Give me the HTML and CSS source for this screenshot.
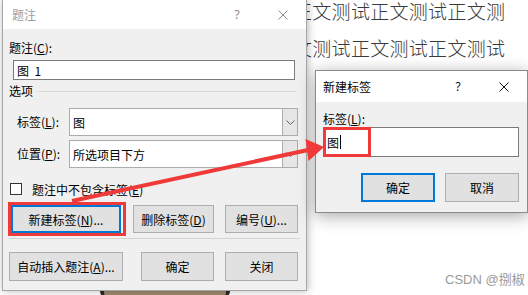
FILE: index.html
```html
<!DOCTYPE html>
<html lang="zh-CN">
<head>
<meta charset="utf-8">
<title>题注</title>
<link rel="stylesheet" href="styles.css">
</head>
<body>
<main class="doc">
  <p class="doc-line">正文测试正文测试正文测</p>
  <p class="doc-line">文测试正文测试正文测试</p>
</main>
<div class="doc-pic"></div>
<div class="watermark">CSDN @捌椒</div>

<section class="win win-caption">
  <header class="titlebar is-inactive">
    <span class="title">题注</span>
    <span class="tb-btn tb-help">?</span>
    <span class="tb-btn"><svg class="x-icon" width="10" height="10" viewBox="0 0 10 10"><path d="M0.5 0.5L9.5 9.5M9.5 0.5L0.5 9.5" stroke="currentColor" stroke-width="1" fill="none"/></svg></span>
  </header>
  <div class="win-body caption-body">
    <div class="lbl">题注(<u>C</u>):</div>
    <div class="textbox caption-input">图&nbsp;&nbsp;1</div>
    <div class="group-head"><span>选项</span><span class="rule"></span></div>
    <div class="field-row">
      <span class="field-lbl">标签(<u>L</u>):</span>
      <div class="combo"><span class="combo-val">图</span><span class="combo-btn"><svg width="9" height="5" viewBox="0 0 9 5"><path d="M0.5 0.5L4.5 4.5L8.5 0.5" stroke="#606060" stroke-width="1" fill="none"/></svg></span></div>
    </div>
    <div class="field-row field-row-2">
      <span class="field-lbl">位置(<u>P</u>):</span>
      <div class="combo"><span class="combo-val">所选项目下方</span><span class="combo-btn"><svg width="9" height="5" viewBox="0 0 9 5"><path d="M0.5 0.5L4.5 4.5L8.5 0.5" stroke="#606060" stroke-width="1" fill="none"/></svg></span></div>
    </div>
    <div class="check-row"><span class="checkbox"></span><span>题注中不包含标签(<u>E</u>)</span></div>
    <div class="btn-row btn-row-top">
      <div class="mark-box"><button class="btn btn-focus w110">新建标签(<u>N</u>)...</button></div>
      <button class="btn w81 ml7">删除标签(<u>D</u>)</button>
      <button class="btn w73 ml11">编号(<u>U</u>)...</button>
    </div>
    <div class="sep"></div>
    <div class="btn-row btn-row-bottom">
      <button class="btn w114 tall">自动插入题注(<u>A</u>)...</button>
      <button class="btn w73 tall ml18">确定</button>
      <button class="btn w73 tall ml11">关闭</button>
    </div>
  </div>
</section>

<section class="win win-newlabel">
  <header class="titlebar">
    <span class="title">新建标签</span>
    <span class="tb-btn tb-help dark">?</span>
    <span class="tb-btn dark"><svg class="x-icon" width="10" height="10" viewBox="0 0 10 10"><path d="M0.5 0.5L9.5 9.5M9.5 0.5L0.5 9.5" stroke="currentColor" stroke-width="1" fill="none"/></svg></span>
  </header>
  <div class="win-body nl-body">
    <div class="lbl">标签(<u>L</u>):</div>
    <div class="textbox nl-input"><span>图</span><span class="caret"></span><span class="mark-input"></span></div>
    <div class="nl-buttons">
      <button class="btn btn-default w74 tall">确定</button>
      <button class="btn w74 tall">取消</button>
    </div>
  </div>
</section>

<svg class="annot" width="528" height="295" viewBox="0 0 528 295">
  <line x1="72" y1="201" x2="308" y2="150" stroke="#f03a3a" stroke-width="4"/>
  <polygon points="324,147 305.5,139 308.5,161" fill="#f03a3a"/>
</svg>
</body>
</html>
```

FILE: styles.css
```css
* { box-sizing: border-box; margin: 0; padding: 0; }
html, body { width: 528px; height: 295px; overflow: hidden; background: #fff; }
body {
  position: relative;
  font-family: "Noto Sans CJK SC", "Microsoft YaHei", sans-serif;
  font-size: 12px;
  color: #000;
}
u { text-decoration: underline; text-underline-offset: 1px; }

/* document behind the dialogs */
.doc { padding-left: 293px; margin-top: -8px; }
.doc-line {
  font-size: 19px;
  font-weight: 300;
  line-height: 37px;
  letter-spacing: 0.3px;
  white-space: nowrap;
  color: #3a3a3a;
}
.doc-pic {
  position: absolute;
  left: 100px;
  top: 291px;
  width: 130px;
  height: 8px;
  background: #a08a6f;
  border-left: 4px solid #2c2c2c;
  border-right: 4px solid #2c2c2c;
  border-radius: 0 0 40px 40px;
}
.watermark {
  position: absolute;
  left: 445px;
  top: 271px;
  font-family: "Liberation Sans", "Noto Sans CJK SC", sans-serif;
  font-size: 13px;
  line-height: 18px;
  color: #9a9a9a;
}

/* windows */
.win {
  position: absolute;
  display: flex;
  flex-direction: column;
  background: #f0f0f0;
}
.win-caption {
  left: 2px;
  top: -1px;
  width: 305px;
  height: 292px;
  border: 1px solid #a6a6a6;
  box-shadow: 1px 0 8px rgba(0,0,0,0.28);
}
.win-newlabel {
  left: 315px;
  top: 70px;
  width: 213px;
  height: 143px;
  border: 1px solid #8a8a8a;
  box-shadow: 0 3px 16px rgba(0,0,0,0.35);
}

.titlebar {
  display: flex;
  align-items: center;
  background: #fff;
  flex: none;
}
.win-caption .titlebar { height: 29px; padding-left: 9px; }
.win-newlabel .titlebar { height: 31px; padding-left: 7px; }
.title { flex: 1; line-height: 16px; }
.is-inactive .title { color: #9c9c9c; }
.tb-btn {
  width: 46px;
  height: 100%;
  display: flex;
  align-items: center;
  justify-content: center;
  color: #8a8a8a;
}
.tb-help { font-family: "Noto Sans", sans-serif; font-size: 12px; }
.tb-btn.dark { color: #111; }
.x-icon { display: block; }

.win-body { flex: 1; display: flex; flex-direction: column; align-items: flex-start; }
.caption-body { padding-left: 6px; }
.lbl { line-height: 16px; }
.caption-body > .lbl { margin-top: 11px; }

.textbox {
  background: #fff;
  border: 1px solid #7a7a7a;
  display: flex;
  align-items: center;
  padding-left: 3px;
}
.caption-input { margin-top: 4px; margin-left: 4px; width: 282px; height: 20px; }

.group-head {
  margin-top: 3px;
  height: 16px;
  width: 287px;
  display: flex;
  align-items: center;
  line-height: 16px;
}
.group-head .rule { flex: 1; height: 1px; background: #dadada; margin-left: 5px; }

.field-row { display: flex; align-items: center; margin-top: 9px; margin-left: 8px; }
.field-row-2 { margin-top: 4px; }
.field-lbl { width: 52px; line-height: 16px; }
.combo {
  width: 229px;
  height: 28px;
  display: flex;
  background: #fff;
  border: 1px solid #adadad;
}
.combo-val { flex: 1; display: flex; align-items: center; padding-left: 3px; }
.combo-btn {
  width: 15px;
  display: flex;
  align-items: center;
  justify-content: center;
  background: #e6e6e6;
  border-left: 1px solid #adadad;
}

.check-row { display: flex; align-items: center; height: 16px; margin-top: 13px; margin-left: 1px; }
.checkbox {
  width: 12px;
  height: 12px;
  border: 1px solid #333;
  background: #fff;
  margin-right: 10px;
}

.btn-row { display: flex; align-items: center; }
.btn-row-top { margin-top: 5px; margin-left: -1px; }
.btn-row-bottom { margin-top: 13px; }
.btn {
  font: inherit;
  color: #000;
  height: 28px;
  background: #e1e1e1;
  border: 1px solid #adadad;
  display: flex;
  align-items: center;
  justify-content: center;
  white-space: nowrap;
}
.btn.tall { height: 29px; }
.btn-focus { border: 2px solid #0078d7; }
.btn-default { border: 2px solid #0078d7; }
.w110 { width: 110px; }
.w81 { width: 81px; }
.w73 { width: 73px; }
.w74 { width: 74px; }
.w114 { width: 114px; }
.ml7 { margin-left: 7px; }
.ml11 { margin-left: 11px; }
.ml18 { margin-left: 18px; }

.mark-box {
  border: 3px solid #f03a3a;
  padding-right: 2px;
}

.sep { margin-top: 2px; width: 291px; height: 1px; background: #d3d3d3; }

/* new label dialog */
.nl-body { padding-left: 7px; }
.nl-body > .lbl { margin-top: 9px; }
.nl-input { position: relative; width: 196px; height: 30px; }
.caret { width: 1px; height: 14px; background: #000; margin-left: 1px; }
.mark-input {
  position: absolute;
  left: -1px;
  top: -1px;
  width: 48px;
  height: 30px;
  border: 3px solid #f03a3a;
}
.nl-buttons {
  align-self: stretch;
  display: flex;
  justify-content: flex-end;
  gap: 10px;
  padding-right: 8px;
  margin-top: 16px;
}

.annot { position: absolute; left: 0; top: 0; pointer-events: none; }
```
